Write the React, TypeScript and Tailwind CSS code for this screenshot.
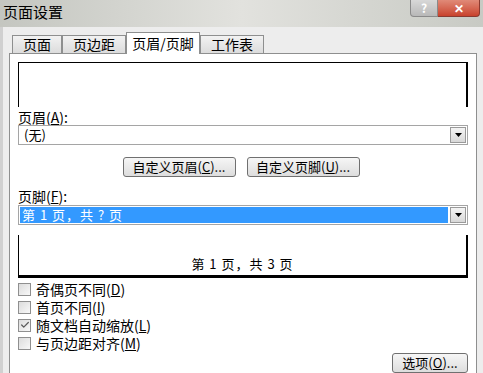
import { Check } from "lucide-react";

const font = { fontFamily: '"Noto Sans CJK SC", "Noto Sans", sans-serif' };

function Tab({ label, active }: { label: string; active?: boolean }) {
  if (active) {
    return (
      <div className="relative z-10 -mb-px flex h-[22px] w-[74px] items-center justify-center border border-b-0 border-[#8e8f8f] bg-white text-[14px] text-black">
        {label}
      </div>
    );
  }
  return (
    <div className="flex h-[18px] items-center justify-center border border-b-0 border-[#8e8f8f] bg-gradient-to-b from-[#f2f2f2] to-[#dcdcdc] px-[10px] text-[14px] text-black">
      {label}
    </div>
  );
}

function Combo({ children, selected }: { children: React.ReactNode; selected?: boolean }) {
  return (
    <div className="flex h-[20px] shrink-0 items-stretch border border-[#a5a5a5] bg-white">
      <div className="flex flex-1 items-center p-[1px]">
        <div
          className={
            selected
              ? "flex h-full w-full items-center bg-[#3399ff] pl-[2px] text-[13px] tracking-[1px] text-white"
              : "flex h-full w-full items-center pl-[4px] text-[13px] text-black"
          }
        >
          {children}
        </div>
      </div>
      <div className="m-[1px] flex w-[16px] items-center justify-center border border-[#9a9a9a] bg-gradient-to-b from-[#f4f4f4] to-[#d8d8d8]">
        <svg width="7" height="4" viewBox="0 0 7 4">
          <path d="M0 0h7L3.5 4z" fill="#000" />
        </svg>
      </div>
    </div>
  );
}

function Btn({ children, className }: { children: React.ReactNode; className?: string }) {
  return (
    <div
      className={
        "flex h-[20px] shrink-0 items-center justify-center rounded-[3px] border border-[#707070] bg-gradient-to-b from-[#f6f6f6] to-[#dddddd] text-[13px] text-black " +
        (className ?? "")
      }
    >
      {children}
    </div>
  );
}

function CheckRow({ label, k, checked }: { label: string; k: string; checked?: boolean }) {
  return (
    <div className="flex h-[18px] shrink-0 items-center gap-[5px]">
      <div className="flex h-[13px] w-[13px] items-center justify-center border border-[#8f8f8f] bg-gradient-to-br from-[#dcdcdc] to-[#f8f8f8]">
        {checked && <Check size={10} strokeWidth={3} className="text-[#5a5a5a]" />}
      </div>
      <span className="text-[14px] leading-none text-black">
        {label}(<u>{k}</u>)
      </span>
    </div>
  );
}

export default function App() {
  return (
    <div className="flex h-[373px] w-[483px] flex-col overflow-hidden bg-[#ededed]" style={font}>
      <div className="flex h-[27px] shrink-0 items-start justify-between bg-gradient-to-r from-[#c4c6c0] via-[#e2e2de] to-[#c8cac4]">
        <span className="mt-[4px] pl-[3px] text-[15px] leading-none text-black">页面设置</span>
        <div className="mr-[3px] flex h-[17px]">
          <div className="flex w-[28px] items-center justify-center rounded-bl-[4px] border border-t-0 border-[#8a8a8a] bg-gradient-to-b from-[#d8d8d8] to-[#b8b8b8] text-[12px] font-bold text-white">
            ?
          </div>
          <div className="flex w-[42px] items-center justify-center rounded-br-[4px] border border-t-0 border-l-0 border-[#8a3a30] bg-gradient-to-b from-[#e08a78] to-[#c8412c] text-[12px] font-bold text-white">
            ✕
          </div>
        </div>
      </div>
      <div className="flex min-h-0 flex-1 flex-col border-l-[3px] border-[#d0d0d0] pl-[6px] pr-[6px] pt-[5px]">
        <div className="flex shrink-0 items-end pl-[3px]">
          <Tab label="页面" />
          <Tab label="页边距" />
          <Tab label="页眉/页脚" active />
          <Tab label="工作表" />
        </div>
        <div className="flex flex-1 flex-col border border-[#8e8f8f] bg-white px-[8px] pt-[8px]">
          <div className="h-[45px] shrink-0 border-l border-r-[2px] border-t border-black" />
          <div className="mt-[2px] shrink-0 text-[14px] leading-[16px] text-black">
            页眉(<u>A</u>):
          </div>
          <Combo>(无)</Combo>
          <div className="mt-[12px] flex shrink-0 justify-center gap-[11px] pr-[4px]">
            <Btn className="w-[113px]">
              自定义页眉(<u>C</u>)...
            </Btn>
            <Btn className="w-[113px]">
              自定义页脚(<u>U</u>)...
            </Btn>
          </div>
          <div className="mt-[11px] shrink-0 text-[14px] leading-[17px] text-black">
            页脚(<u>F</u>):
          </div>
          <Combo selected>第 1 页，共 ? 页</Combo>
          <div className="mt-[10px] flex h-[43px] shrink-0 items-end justify-center border-b-[3px] border-l border-r-[2px] border-black pb-[2px] text-[13px] tracking-[1px] text-black">
            第 1 页，共 3 页
          </div>
          <div className="mt-[2px] flex shrink-0 flex-col">
            <CheckRow label="奇偶页不同" k="D" />
            <CheckRow label="首页不同" k="I" />
            <CheckRow label="随文档自动缩放" k="L" checked />
            <CheckRow label="与页边距对齐" k="M" />
          </div>
          <div className="mt-[1px] flex shrink-0 justify-end">
            <Btn className="w-[76px]">
              选项(<u>O</u>)...
            </Btn>
          </div>
        </div>
      </div>
    </div>
  );
}
